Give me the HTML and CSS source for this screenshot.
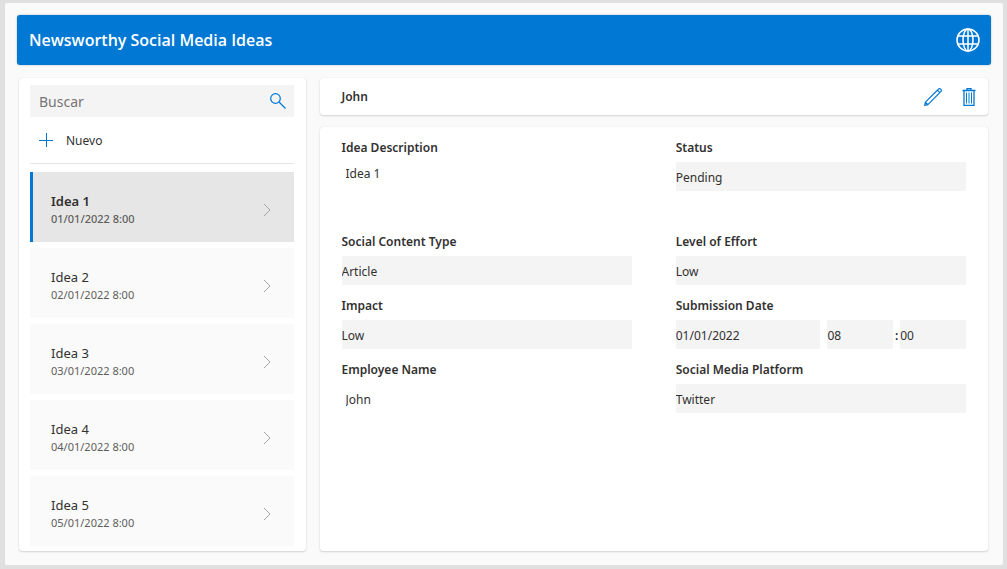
FILE: index.html
```html
<!DOCTYPE html>
<html lang="es">
<head>
  <meta charset="UTF-8">
  <meta name="viewport" content="width=device-width, initial-scale=1.0">
  <title>Newsworthy Social Media Ideas</title>
  <link rel="stylesheet" href="styles.css">
</head>
<body>
  <div class="app">
    <header class="topbar">
      <h1>Newsworthy Social Media Ideas</h1>
      <button class="icon-btn" type="button" aria-label="Idioma">
        <svg width="24" height="24" viewBox="0 0 24 24" fill="none" stroke="#fff" stroke-width="1.5">
          <circle cx="12" cy="12" r="11"/>
          <ellipse cx="12" cy="12" rx="5" ry="11"/>
          <path d="M12 1v22M2 8h20M2 16h20"/>
        </svg>
      </button>
    </header>

    <main class="content">
      <aside class="card sidebar">
        <div class="search">
          <input type="search" placeholder="Buscar" aria-label="Buscar">
          <svg width="16" height="16" viewBox="0 0 16 16" fill="none" stroke="#0078d4" stroke-width="1.2">
            <circle cx="5.5" cy="5.5" r="4.8"/>
            <path d="M9 9l6.5 6.5"/>
          </svg>
        </div>
        <button class="new-btn" type="button">
          <svg width="14" height="14" viewBox="0 0 14 14" stroke="#0078d4" stroke-width="1">
            <path d="M7.5 0v14M0 7.5h14"/>
          </svg>
          Nuevo
        </button>

        <div class="ideas">
          <button class="idea selected" type="button">
            <span><span class="title">Idea 1</span><span class="date">01/01/2022 8:00</span></span>
            <svg width="8" height="14" viewBox="0 0 8 14"><path d="M1 1l6 6-6 6"/></svg>
          </button>
          <button class="idea" type="button">
            <span><span class="title">Idea 2</span><span class="date">02/01/2022 8:00</span></span>
            <svg width="8" height="14" viewBox="0 0 8 14"><path d="M1 1l6 6-6 6"/></svg>
          </button>
          <button class="idea" type="button">
            <span><span class="title">Idea 3</span><span class="date">03/01/2022 8:00</span></span>
            <svg width="8" height="14" viewBox="0 0 8 14"><path d="M1 1l6 6-6 6"/></svg>
          </button>
          <button class="idea" type="button">
            <span><span class="title">Idea 4</span><span class="date">04/01/2022 8:00</span></span>
            <svg width="8" height="14" viewBox="0 0 8 14"><path d="M1 1l6 6-6 6"/></svg>
          </button>
          <button class="idea" type="button">
            <span><span class="title">Idea 5</span><span class="date">05/01/2022 8:00</span></span>
            <svg width="8" height="14" viewBox="0 0 8 14"><path d="M1 1l6 6-6 6"/></svg>
          </button>
        </div>
      </aside>

      <section class="details">
        <div class="card toolbar">
          <h2>John</h2>
          <button class="icon-btn" type="button" aria-label="Editar">
            <svg width="18" height="18" viewBox="0 0 18 18" fill="none" stroke="#0078d4" stroke-width="1.2" stroke-linejoin="round">
              <path d="M.7 17.3l.7-3.2L14.4 1.2a1.6 1.6 0 0 1 2.4 0 1.6 1.6 0 0 1 0 2.4L3.9 16.6zM1.4 14.1l2.5 2.5M13.4 2.2l2.4 2.4"/>
            </svg>
          </button>
          <button class="icon-btn" type="button" aria-label="Eliminar">
            <svg width="14" height="18" viewBox="0 0 14 18" fill="none" stroke="#0078d4">
              <path d="M.5 2.5h13M5 2V.5h4V2M2 2.5v15h10v-15" stroke-width="1.3"/>
              <path d="M4.5 4.5v11M7 4.5v11M9.5 4.5v11"/>
            </svg>
          </button>
        </div>

        <form class="card form">
          <div class="field">
            <label for="description">Idea Description</label>
            <textarea id="description" class="plain" readonly>Idea 1</textarea>
          </div>
          <div class="field">
            <label for="status">Status</label>
            <input type="text" id="status" value="Pending" readonly>
          </div>
          <div class="field">
            <label for="type">Social Content Type</label>
            <input type="text" id="type" value="Article" readonly>
          </div>
          <div class="field">
            <label for="effort">Level of Effort</label>
            <input type="text" id="effort" value="Low" readonly>
          </div>
          <div class="field">
            <label for="impact">Impact</label>
            <input type="text" id="impact" value="Low" readonly>
          </div>
          <div class="field">
            <label for="date">Submission Date</label>
            <div class="datetime">
              <input type="text" id="date" value="01/01/2022" readonly>
              <span></span>
              <input type="text" value="08" aria-label="Hour" readonly>
              <span>:</span>
              <input type="text" value="00" aria-label="Minute" readonly>
            </div>
          </div>
          <div class="field">
            <label for="employee">Employee Name</label>
            <input type="text" id="employee" class="plain" value="John" readonly>
          </div>
          <div class="field">
            <label for="platform">Social Media Platform</label>
            <input type="text" id="platform" value="Twitter" readonly>
          </div>
        </form>
      </section>
    </main>
  </div>
</body>
</html>
```
FILE: styles.css
```css
* {
  box-sizing: border-box;
}
body {
  margin: 0;
  background: #e0e0e0;
  color: #323130;
  font-family: "Segoe UI", "Noto Sans", sans-serif;
  font-size: 12px;
}
h1, h2 {
  margin: 0;
  font-weight: 600;
}
button, input, textarea {
  font: inherit;
  color: inherit;
  border: none;
  border-radius: 0;
  margin: 0;
  padding: 0;
  outline: none;
}
button {
  background: none;
  cursor: pointer;
}
svg {
  display: block;
}
.app {
  display: flex;
  flex-direction: column;
  gap: 13px;
  min-height: 100vh;
  padding: 12px 12px 14px;
  border: solid #e0e0e0;
  border-width: 3px 4px 4px 5px;
  border-radius: 6px;
  background: #fafafa;
}
.topbar {
  display: flex;
  align-items: center;
  justify-content: space-between;
  height: 50px;
  padding: 0 11px 0 12px;
  border-radius: 3px;
  background: #0078d4;
  color: #fff;
  box-shadow: 0 0 2px rgba(0, 0, 0, 0.3);
}
.topbar h1 {
  font-family: "Segoe UI", "Open Sans", sans-serif;
  font-size: 16px;
}
.content {
  flex: 1;
  display: grid;
  grid-template-columns: 3fr 7fr;
  gap: 14px;
  padding: 0 3px 0 2px;
}
.card {
  border-radius: 3px;
  background: #fff;
  box-shadow: 0 0 1px rgba(0, 0, 0, 0.15), 0 1px 2px rgba(0, 0, 0, 0.15);
}
.sidebar {
  padding: 7px 12px 5px 11px;
}
.search {
  display: flex;
  align-items: center;
  height: 32px;
  padding: 0 8px 0 9px;
  background: #f4f4f4;
}
.search input {
  flex: 1;
  min-width: 0;
  background: none;
  font-size: 14px;
}
.search input::placeholder {
  color: #767676;
}
.new-btn {
  display: flex;
  align-items: center;
  gap: 13px;
  width: 100%;
  height: 47px;
  padding: 0 9px;
  border-bottom: 1px solid #e6e6e6;
}
.ideas {
  display: flex;
  flex-direction: column;
  gap: 6px;
  margin-top: 8px;
}
.idea {
  display: flex;
  align-items: center;
  justify-content: space-between;
  height: 70px;
  padding: 5px 23px 0 18px;
  border-left: 3px solid #fafafa;
  background: #fafafa;
  text-align: left;
}
.idea svg {
  fill: none;
  stroke: #a6a6a6;
}
.title, .date {
  display: block;
  line-height: 17px;
}
.title {
  font-size: 13px;
}
.date {
  font-size: 11px;
  color: #605e5c;
}
.selected {
  border-left-color: #0078d4;
  background: #e6e6e6;
}
.selected .title {
  font-weight: 600;
}
.selected .date {
  font-weight: 500;
}
.details {
  display: flex;
  flex-direction: column;
  gap: 12px;
}
.toolbar {
  display: flex;
  align-items: center;
  gap: 20px;
  height: 37px;
  padding: 0 12px 0 22px;
}
.toolbar h2 {
  flex: 1;
  font-size: 12px;
}
.form {
  flex: 1;
  display: grid;
  grid-template-columns: 1fr 1fr;
  align-content: start;
  gap: 11px 44px;
  padding: 11px 22px;
}
.field {
  display: flex;
  flex-direction: column;
  gap: 4px;
}
.field label {
  font-weight: 600;
  line-height: 20px;
}
.field input {
  width: 100%;
  min-width: 0;
  height: 29px;
  padding-top: 2px;
  background: #f4f4f4;
}
.field .plain {
  padding-left: 4px;
  background: none;
}
.field textarea {
  height: 59px;
  line-height: 24px;
  resize: none;
}
.datetime {
  display: grid;
  grid-template-columns: 11fr 7px 5fr 7px 5fr;
  align-items: center;
}
.datetime span {
  padding-top: 2px;
  font-weight: 600;
  text-align: center;
}
```
